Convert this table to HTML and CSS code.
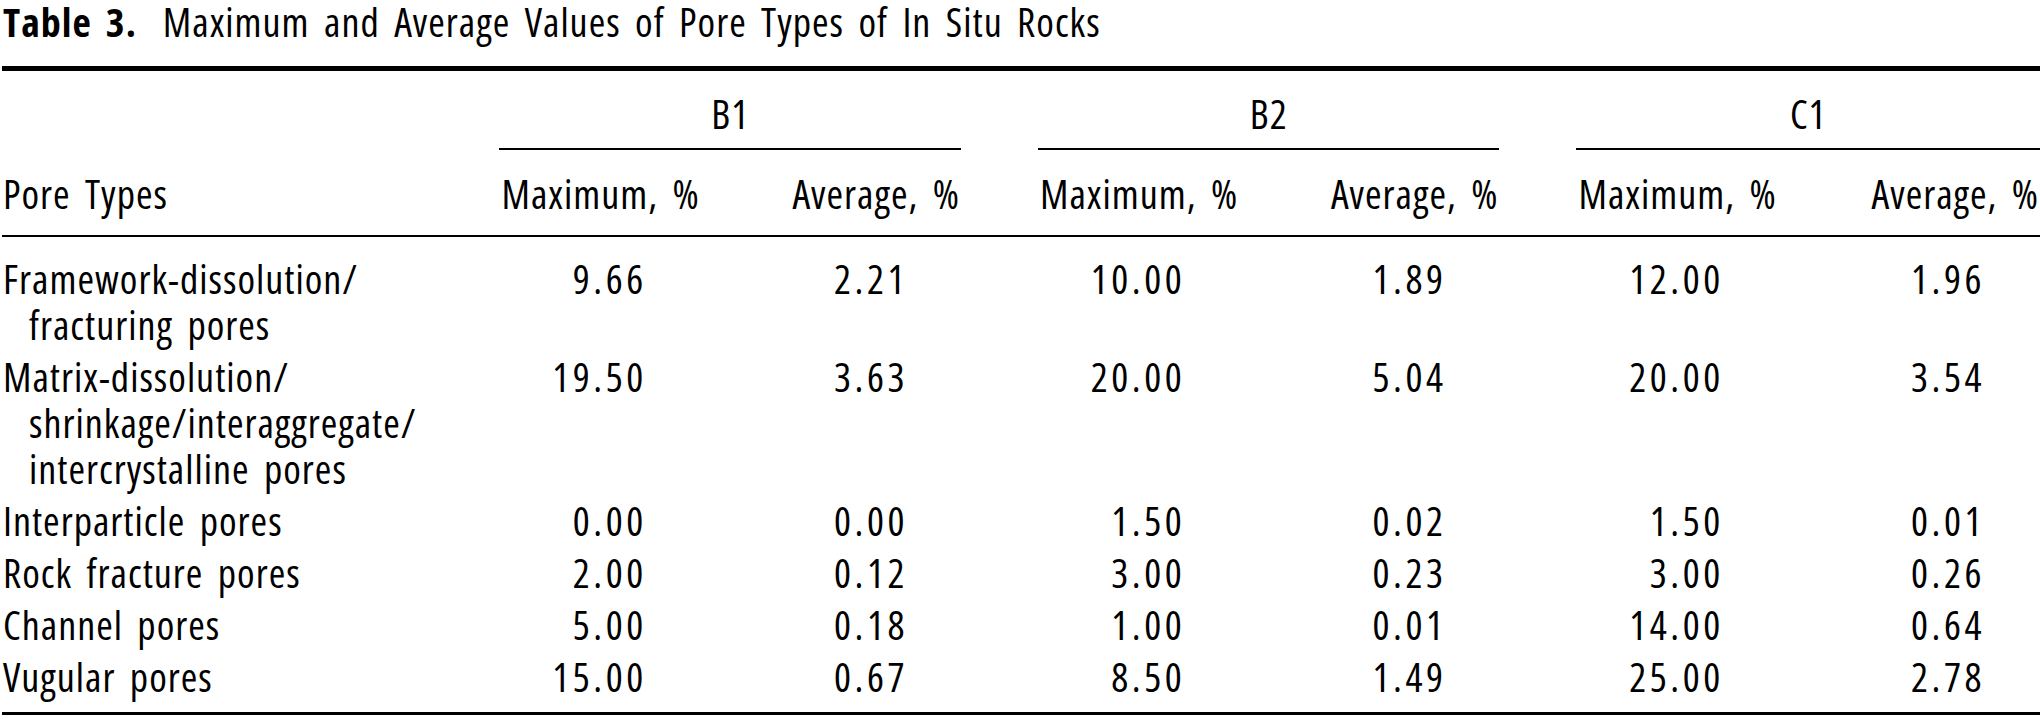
FILE: index.html
```html
<!DOCTYPE html>
<html lang="en">
<head>
<meta charset="utf-8">
<title>Table 3</title>
<link rel="stylesheet" href="styles.css">
</head>
<body>
<div class="page">
  <p class="caption"><span class="label">Table 3.</span>Maximum and Average Values of Pore Types of In Situ Rocks</p>
  <table class="data">
    <colgroup>
      <col class="c-name">
      <col class="c-max"><col class="c-avg">
      <col class="c-gap">
      <col class="c-max"><col class="c-avg">
      <col class="c-gap">
      <col class="c-max"><col class="c-avg c-last">
    </colgroup>
    <thead>
      <tr class="groups">
        <th></th>
        <th colspan="2" class="group">B1</th>
        <th></th>
        <th colspan="2" class="group">B2</th>
        <th></th>
        <th colspan="2" class="group">C1</th>
      </tr>
      <tr class="heads">
        <th class="name">Pore Types</th>
        <th class="h-max">Maximum, %</th>
        <th class="h-avg">Average, %</th>
        <th></th>
        <th class="h-max">Maximum, %</th>
        <th class="h-avg">Average, %</th>
        <th></th>
        <th class="h-max">Maximum, %</th>
        <th class="h-avg">Average, %</th>
      </tr>
    </thead>
    <tbody>
      <tr>
        <td class="name">Framework-dissolution/<br>fracturing pores</td>
        <td class="v-max">9.66</td><td class="v-avg">2.21</td><td></td>
        <td class="v-max">10.00</td><td class="v-avg">1.89</td><td></td>
        <td class="v-max">12.00</td><td class="v-avg">1.96</td>
      </tr>
      <tr>
        <td class="name">Matrix-dissolution/<br>shrinkage/interaggregate/<br>intercrystalline pores</td>
        <td class="v-max">19.50</td><td class="v-avg">3.63</td><td></td>
        <td class="v-max">20.00</td><td class="v-avg">5.04</td><td></td>
        <td class="v-max">20.00</td><td class="v-avg">3.54</td>
      </tr>
      <tr>
        <td class="name">Interparticle pores</td>
        <td class="v-max">0.00</td><td class="v-avg">0.00</td><td></td>
        <td class="v-max">1.50</td><td class="v-avg">0.02</td><td></td>
        <td class="v-max">1.50</td><td class="v-avg">0.01</td>
      </tr>
      <tr>
        <td class="name">Rock fracture pores</td>
        <td class="v-max">2.00</td><td class="v-avg">0.12</td><td></td>
        <td class="v-max">3.00</td><td class="v-avg">0.23</td><td></td>
        <td class="v-max">3.00</td><td class="v-avg">0.26</td>
      </tr>
      <tr>
        <td class="name">Channel pores</td>
        <td class="v-max">5.00</td><td class="v-avg">0.18</td><td></td>
        <td class="v-max">1.00</td><td class="v-avg">0.01</td><td></td>
        <td class="v-max">14.00</td><td class="v-avg">0.64</td>
      </tr>
      <tr class="last">
        <td class="name">Vugular pores</td>
        <td class="v-max">15.00</td><td class="v-avg">0.67</td><td></td>
        <td class="v-max">8.50</td><td class="v-avg">1.49</td><td></td>
        <td class="v-max">25.00</td><td class="v-avg">2.78</td>
      </tr>
    </tbody>
  </table>
</div>
</body>
</html>
```
FILE: styles.css
```css
html, body {
  margin: 0;
  padding: 0;
  background: #ffffff;
}

.page {
  padding-left: 2px;
  width: 2038px;
  font-family: "Open Sans", "Liberation Sans", sans-serif;
  font-stretch: 75%;
  font-size: 40px;
  letter-spacing: 1px;
  word-spacing: 6px;
  color: #000000;
}

.caption {
  margin: 0 0 22px 1px;
  line-height: 44px;
  white-space: nowrap;
}

.caption .label {
  font-weight: 700;
  letter-spacing: 1px;
  margin-right: 26px;
}

.data {
  width: 2038px;
  table-layout: fixed;
  border-collapse: separate;
  border-spacing: 0;
  border-top: 5px solid #000000;
  border-bottom: 3px solid #000000;
}

.c-name { width: 497px; }
.c-max { width: 230px; }
.c-avg { width: 231px; }
.c-gap { width: 77px; }
.c-last { width: 233px; }

.data th,
.data td {
  padding: 0;
  font-weight: 400;
  line-height: 44px;
  vertical-align: top;
  white-space: nowrap;
}

.groups th {
  padding-top: 21px;
  padding-bottom: 12px;
}

.groups th.group {
  text-align: center;
  border-bottom: 2px solid #000000;
}

.heads th {
  padding-top: 22px;
  padding-bottom: 19px;
  border-bottom: 2px solid #000000;
}

.heads th.name {
  text-align: left;
  padding-left: 1px;
}

.heads th.h-max {
  text-align: left;
  padding-left: 2px;
}

.heads th.h-avg {
  text-align: right;
  padding-right: 1px;
}

.data td {
  padding-top: 4px;
  padding-bottom: 2px;
  line-height: 46px;
}

.data tbody tr:first-child td {
  padding-top: 19px;
}

.data tbody tr.last td {
  padding-bottom: 12px;
}

.data td.name {
  padding-left: 27px;
  text-indent: -26px;
}

.data td.v-max,
.data td.v-avg {
  text-align: right;
  letter-spacing: 3.5px;
}

.data td.v-max {
  padding-right: 83px;
}

.data td.v-avg {
  padding-right: 53px;
}

.data td.v-avg:last-child {
  padding-right: 55px;
}
```
